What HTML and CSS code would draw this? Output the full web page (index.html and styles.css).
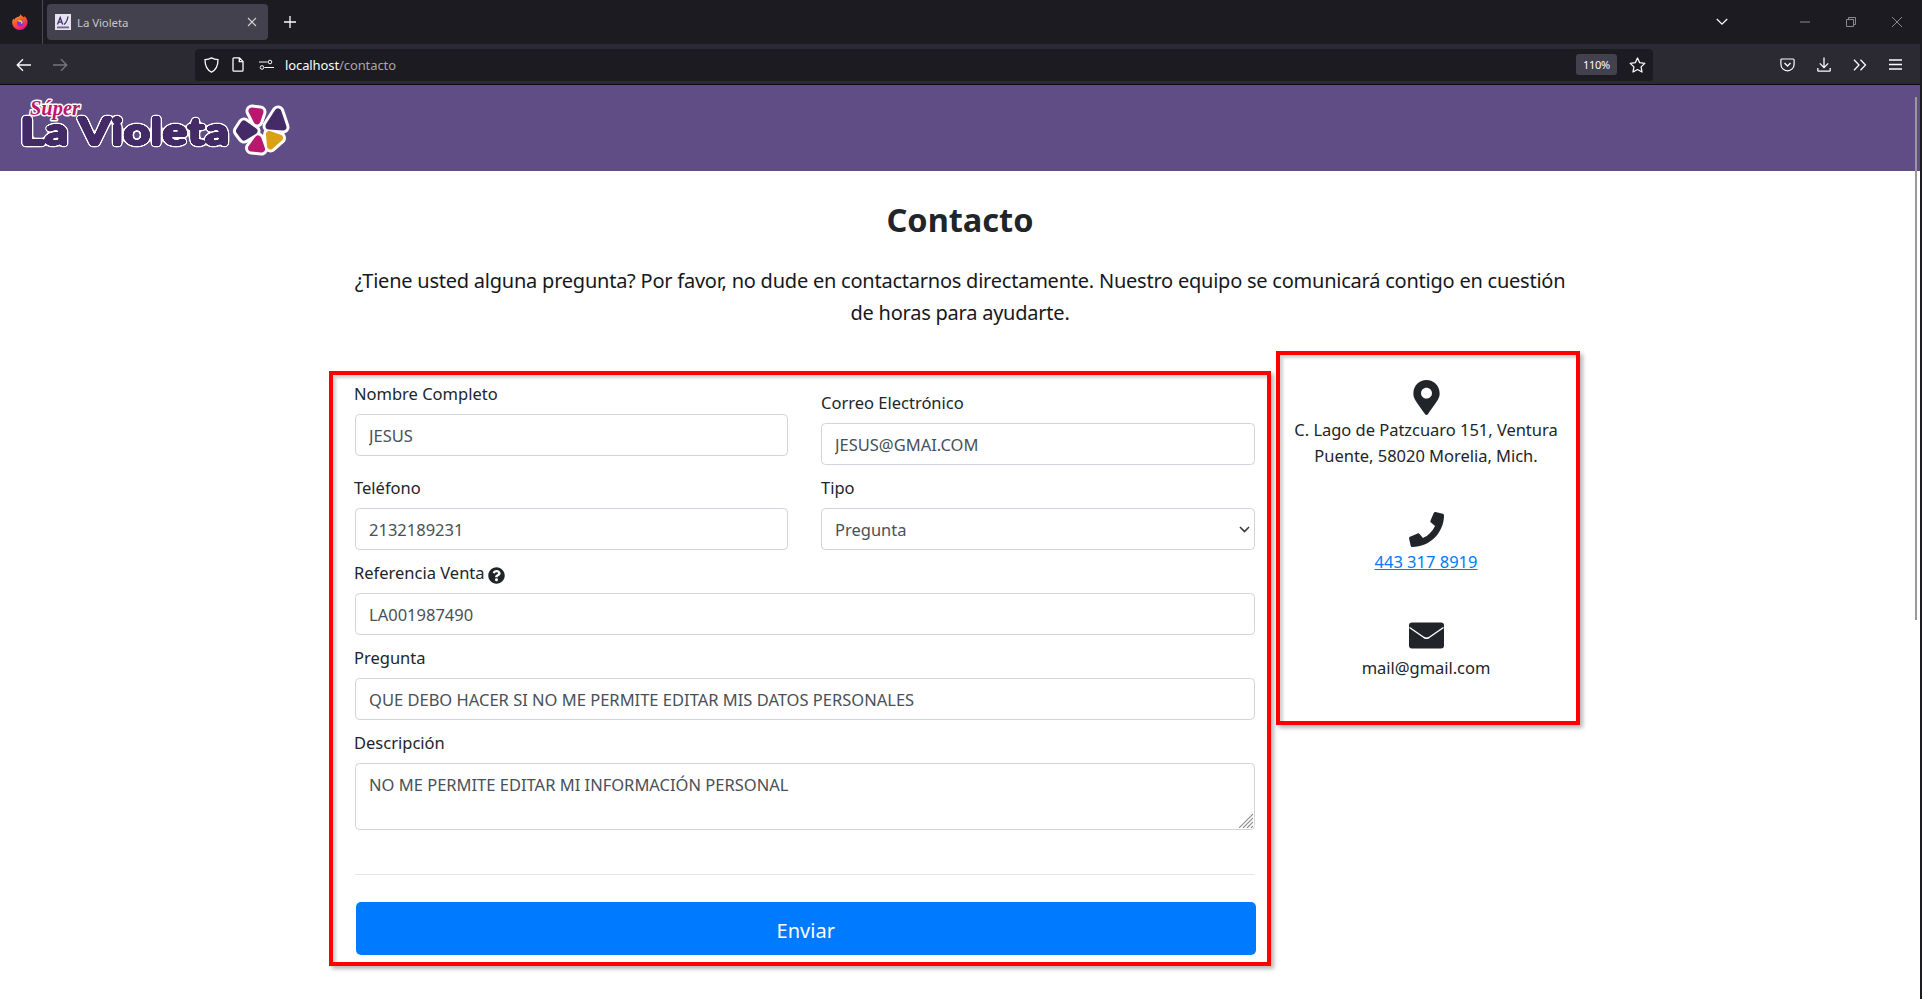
FILE: index.html
```html
<!DOCTYPE html>
<html lang="es">
<head>
<meta charset="utf-8">
<title>La Violeta</title>
<link rel="stylesheet" href="styles.css">
</head>
<body>
<div class="window">
  <div class="tabbar">
    <svg class="ff-logo" width="18" height="18" viewBox="0 0 18 18">
      <defs><linearGradient id="ffg" x1="0" y1="0" x2="0.6" y2="1"><stop offset="0" stop-color="#ffb020"/><stop offset="0.5" stop-color="#ff5a2c"/><stop offset="1" stop-color="#f0157f"/></linearGradient></defs>
      <path d="M9.500 1c.6 1.800 2.500 2.500 3.500 3.500.4-.5.500-1 .5-1.500 1.800 1.500 3 3.500 3 6 0 4.200-3.400 8-7.600 8S1.200 13.500 1.200 9.500c0-1.500.4-2.900 1.300-4 .1.600.4 1 .8 1.300C4 4.800 6.500 4 7.500 3.800 8.500 3.300 9.500 2.200 9.500 1z" fill="url(#ffg)"/>
      <circle cx="9.200" cy="10" r="3.200" fill="#7a35d8"/>
      <path d="M6 8c1.500-1.500 4.500-1.500 5.500.5.500 1.200-.3 2.500-1.800 2.800 1-.9.600-2-.4-2.300C8 8.700 7 8.400 6 8z" fill="#ffc030"/>
    </svg>
    <span class="tab-sep"></span>
    <div class="tab">
      <span class="favicon"><svg width="16" height="16" viewBox="0 0 16 16"><rect width="16" height="16" fill="#e6e3ee"/><path d="M2.500 10.500 5.200 3.500 7.700 10.500M3.500 8.200h3.500M13 2.500c-.5 3-1.500 6-4 8" fill="none" stroke="#3d2f73" stroke-width="1.300"/><rect x="2" y="12.500" width="12" height="1.800" fill="#6f6590"/></svg></span>
      <span class="tab-title">La Violeta</span>
      <svg class="tab-close" width="10" height="10" viewBox="0 0 10 10"><path d="M1 1l8 8M9 1l-8 8" stroke="#d4d4d8" stroke-width="1.100"/></svg>
    </div>
    <svg class="new-tab" width="12" height="12" viewBox="0 0 12 12"><path d="M6 0v12M0 6h12" stroke="#fbfbfe" stroke-width="1.300"/></svg>
    <svg class="tab-list" width="12" height="8" viewBox="0 0 12 8"><path d="M.8 1l5.200 5.200L11.200 1" fill="none" stroke="#fbfbfe" stroke-width="1.300"/></svg>
    <svg class="win-min" width="10" height="2" viewBox="0 0 10 2"><path d="M0 1h10" stroke="#8a8a90" stroke-width="1"/></svg>
    <svg class="win-max" width="10" height="10" viewBox="0 0 10 10"><path d="M.5 2.500h7v7h-7zM2.500 2.500v-2h7v7h-2" fill="none" stroke="#8a8a90" stroke-width="1"/></svg>
    <svg class="win-close" width="10" height="10" viewBox="0 0 10 10"><path d="M0 0l10 10M10 0L0 10" stroke="#8a8a90" stroke-width="1"/></svg>
  </div>
  <div class="toolbar">
    <svg class="nav-back" width="16" height="14" viewBox="0 0 16 14"><path d="M15 7H1.500M7 1.200 1.200 7 7 12.800" fill="none" stroke="#fbfbfe" stroke-width="1.300"/></svg>
    <svg class="nav-forward" width="16" height="14" viewBox="0 0 16 14"><path d="M1 7h13.500M9 1.200 14.800 7 9 12.800" fill="none" stroke="#77767e" stroke-width="1.300"/></svg>
    <div class="urlbar">
      <svg class="url-shield" width="15" height="16" viewBox="0 0 15 16"><path d="M7.500.9C5.600 2 3.400 2.500 1 2.600c0 5.400.8 10 6.500 12.600C13.200 12.600 14 8 14 2.600 11.600 2.500 9.400 2 7.500.9z" fill="none" stroke="#fbfbfe" stroke-width="1.300"/></svg>
      <svg class="url-page" width="12" height="15" viewBox="0 0 12 15"><path d="M1 1.800c0-.5.400-.9.900-.9h5.600L11 4.400v8.800c0 .5-.4.9-.9.900H1.900c-.5 0-.9-.4-.9-.9zM7.300 1v3.600H11" fill="none" stroke="#fbfbfe" stroke-width="1.300"/></svg>
      <svg class="url-perm" width="15" height="12" viewBox="0 0 15 12"><circle cx="11" cy="3" r="1.800" fill="none" stroke="#fbfbfe" stroke-width="1"/><circle cx="3" cy="8.500" r="1.800" fill="none" stroke="#fbfbfe" stroke-width="1"/><path d="M0 3h8.500M5.500 8.500H15" stroke="#fbfbfe" stroke-width="1"/></svg>
      <span class="url-text">localhost<span class="url-path">/contacto</span></span>
      <span class="zoom-badge">110%</span>
      <svg class="url-star" width="17" height="16" viewBox="0 0 17 16"><path d="M8.500 1l2.200 4.700 5.100.7-3.700 3.500.9 5.100-4.500-2.500L4 15l.9-5.100L1.200 6.400l5.100-.7z" fill="none" stroke="#fbfbfe" stroke-width="1.300" stroke-linejoin="round"/></svg>
    </div>
    <svg class="tool-pocket" width="15" height="14" viewBox="0 0 15 14"><path d="M1.800 1h11.400c.5 0 .9.400.9.900v4.300c0 3.600-3 6.600-6.600 6.600S.9 9.800.9 6.200V1.900c0-.5.400-.9.900-.9z" fill="none" stroke="#fbfbfe" stroke-width="1.200"/><path d="M4.500 5l3 3 3-3" fill="none" stroke="#fbfbfe" stroke-width="1.300"/></svg>
    <svg class="tool-download" width="14" height="15" viewBox="0 0 14 15"><path d="M7 .5v10M2.800 6.400 7 10.600l4.200-4.200M.8 11v2.400c0 .4.300.7.700.7h11c.4 0 .7-.3.700-.7V11" fill="none" stroke="#fbfbfe" stroke-width="1.300"/></svg>
    <svg class="tool-more" width="14" height="12" viewBox="0 0 14 12"><path d="M1 .8 6 6l-5 5.200M7.500.8l5 5.200-5 5.200" fill="none" stroke="#fbfbfe" stroke-width="1.300"/></svg>
    <svg class="tool-menu" width="13" height="11" viewBox="0 0 13 11"><path d="M0 1h13M0 5.500h13M0 10h13" stroke="#fbfbfe" stroke-width="1.300"/></svg>
  </div>
  <div class="page">
    <span class="scroll-thumb"></span>
    <header class="site-header">
      <svg class="logo" width="300" height="86" viewBox="0 0 300 86" role="img" aria-label="Súper La Violeta">
        <defs>
          <filter id="logo-fat" x="-6%" y="-30%" width="112%" height="160%" color-interpolation-filters="sRGB">
            <feGaussianBlur in="SourceAlpha" stdDeviation="1.300" result="b1"/>
            <feComponentTransfer in="b1" result="inner"><feFuncA type="linear" slope="9" intercept="-1.100"/></feComponentTransfer>
            <feFlood flood-color="#452a68"/>
            <feComposite in2="inner" operator="in" result="purple"/>
            <feGaussianBlur in="inner" stdDeviation="1.500" result="b2"/>
            <feComponentTransfer in="b2" result="outer"><feFuncA type="linear" slope="9" intercept="-1"/></feComponentTransfer>
            <feFlood flood-color="#ffffff"/>
            <feComposite in2="outer" operator="in" result="white"/>
            <feMerge><feMergeNode in="white"/><feMergeNode in="purple"/></feMerge>
          </filter>
          <path id="p1" d="M252 26 260 27 257 36z"/>
          <path id="p2" d="M278 27 283 42 269 41z"/>
          <path id="p3" d="M244 39 254 46 244 52 239.500 46z"/>
          <path id="p4" d="M258 54 261.500 64 251.500 63z"/>
          <path id="p5" d="M269.500 49.500 279.500 53 270.500 61z"/>
        </defs>
        <g fill="#fff" stroke="#fff" stroke-width="13" stroke-linejoin="round">
          <use href="#p1"/><use href="#p2"/><use href="#p3"/><use href="#p4"/><use href="#p5"/>
        </g>
        <text class="logo-name" x="20" y="60" textLength="209" lengthAdjust="spacingAndGlyphs" filter="url(#logo-fat)">La Violeta</text>
        <text class="logo-super" x="30" y="30" textLength="50" lengthAdjust="spacingAndGlyphs">Súper</text>
        <g stroke-width="7" stroke-linejoin="round">
          <use href="#p1" fill="#b9186f" stroke="#b9186f"/>
          <use href="#p2" fill="#452a68" stroke="#452a68"/>
          <use href="#p3" fill="#452a68" stroke="#452a68"/>
          <use href="#p4" fill="#b9186f" stroke="#b9186f"/>
          <use href="#p5" fill="#dca015" stroke="#dca015"/>
        </g>
      </svg>
    </header>
    <main class="content">
      <h1 class="title">Contacto</h1>
      <p class="lead">¿Tiene usted alguna pregunta? Por favor, no dude en contactarnos directamente. Nuestro equipo se comunicará contigo en cuestión<br>de horas para ayudarte.</p>
      <div class="columns">
        <form class="form-card">
          <div class="form-grid">
            <div class="field">
              <label class="field-label" for="nombre">Nombre Completo</label>
              <input class="control" id="nombre" value="JESUS">
            </div>
            <div class="field field-right field-offset">
              <label class="field-label" for="correo">Correo Electrónico</label>
              <input class="control" id="correo" value="JESUS@GMAI.COM">
            </div>
            <div class="field">
              <label class="field-label" for="telefono">Teléfono</label>
              <input class="control" id="telefono" value="2132189231">
            </div>
            <div class="field field-right">
              <label class="field-label" for="tipo">Tipo</label>
              <div class="select-wrap">
                <select class="control select" id="tipo"><option>Pregunta</option></select>
                <svg class="select-arrow" width="11" height="7" viewBox="0 0 11 7"><path d="M1 1l4.500 4.500L10 1" fill="none" stroke="#343a40" stroke-width="1.600"/></svg>
              </div>
            </div>
            <div class="field field-wide">
              <label class="field-label" for="referencia">Referencia Venta
                <svg class="help" width="17" height="17" viewBox="0 0 512 512"><path fill="#212529" d="M504 256c0 137-111 248-248 248S8 393 8 256 119 8 256 8s248 111 248 248zM262.700 90c-54.500 0-89.300 23-116.500 63.800-3.500 5.300-2.400 12.400 2.700 16.300l34.700 26.300c5.200 3.900 12.600 3 16.700-2.100 17.900-22.700 30.200-35.800 57.300-35.800 20.400 0 45.700 13.100 45.700 33 0 15-12.400 22.700-32.600 34-23.600 13.200-54.800 29.700-54.800 70.900V300c0 6.600 5.400 12 12 12h56c6.600 0 12-5.400 12-12v-1.300c0-28.500 83.400-29.700 83.400-106.900 0-58.100-60.300-101.800-116.600-101.800zM256 338c-25.400 0-46 20.600-46 46 0 25.400 20.600 46 46 46s46-20.600 46-46c0-25.400-20.600-46-46-46z"/></svg>
              </label>
              <input class="control" id="referencia" value="LA001987490">
            </div>
            <div class="field field-wide">
              <label class="field-label" for="pregunta">Pregunta</label>
              <input class="control" id="pregunta" value="QUE DEBO HACER SI NO ME PERMITE EDITAR MIS DATOS PERSONALES">
            </div>
            <div class="field field-wide">
              <label class="field-label" for="descripcion">Descripción</label>
              <div class="textarea-wrap">
                <textarea class="control textarea" id="descripcion">NO ME PERMITE EDITAR MI INFORMACIÓN PERSONAL</textarea>
                <svg class="grip" width="14" height="14" viewBox="0 0 14 14"><path d="M0 14 14 0M4 14 14 4M8 14 14 8M12 14l2-2" stroke="#8f8f8f" stroke-width="1.200" fill="none"/></svg>
              </div>
            </div>
          </div>
          <hr class="divider">
          <button class="submit" type="button">Enviar</button>
        </form>
        <aside class="info-card">
          <div class="info-item">
            <svg class="info-icon" width="27" height="35" viewBox="0 0 384 512"><path fill="#212529" d="M172.300 501.700C27 291 0 269.400 0 192 0 86 86 0 192 0s192 86 192 192c0 77.400-27 99-172.300 309.700-9.500 13.800-29.900 13.800-39.400 0zM192 272c44.200 0 80-35.800 80-80s-35.800-80-80-80-80 35.800-80 80 35.800 80 80 80z"/></svg>
            <span class="info-text">C. Lago de Patzcuaro 151, Ventura Puente, 58020 Morelia, Mich.</span>
          </div>
          <div class="info-item">
            <svg class="info-icon" width="35" height="35" viewBox="0 0 512 512"><path fill="#212529" d="M493.400 24.600l-104-24c-11.300-2.600-22.900 3.300-27.500 13.900l-48 112c-4.200 9.800-1.400 21.300 6.900 28l60.600 49.600c-36 76.700-98.900 140.500-177.200 177.200l-49.600-60.600c-6.800-8.300-18.200-11.100-28-6.900l-112 48C3.900 366.500-2 378.100.6 389.400l24 104C27.100 504.200 36.700 512 48 512c256.100 0 464-207.500 464-464 0-11.200-7.700-20.900-18.600-23.400z"/></svg>
            <a class="phone" href="#">443 317 8919</a>
          </div>
          <div class="info-item">
            <svg class="info-icon" width="35" height="35" viewBox="0 0 35 35"><rect y="4.500" width="35" height="26" rx="3" fill="#212529"/><path d="M.5 9.500 15 19.500q2.500 1.600 5 0L34.500 9.500" fill="none" stroke="#fff" stroke-width="1.500"/></svg>
            <span class="info-text">mail@gmail.com</span>
          </div>
        </aside>
      </div>
    </main>
  </div>
</div>
</body>
</html>
```

FILE: styles.css
```css
* { box-sizing: border-box; }
html, body { margin: 0; height: 100%; overflow: hidden; background: #1c1b22; }
body { font-family: "Noto Sans", "Open Sans", sans-serif; color: #212529; }

.window { width: 1920px; height: 999px; display: flex; flex-direction: column; overflow: hidden; }

/* browser chrome */
.tabbar { height: 44px; background: #1c1b22; display: flex; align-items: center; flex: none; }
.ff-logo { margin-left: 11px; flex: none; }
.tab-sep { width: 1px; height: 44px; background: #4a4950; margin-left: 13px; }
.tab { width: 221px; height: 36px; margin-left: 4px; background: #42414d; border-radius: 4px; display: flex; align-items: center; padding-left: 8px; }
.favicon { width: 16px; height: 16px; display: block; line-height: 0; }
.tab-title { margin-left: 6px; font-size: 11.500px; letter-spacing: -0.1px; color: #c5c5ca; flex: 1; }
.tab-close { margin-right: 11px; }
.new-tab { margin-left: 16px; }
.tab-list { margin-left: 1420px; }
.win-min { margin-left: 72px; }
.win-max { margin-left: 36px; }
.win-close { margin-left: 36px; }

.toolbar { height: 41px; background: #2b2a33; border-bottom: 1px solid #0c0c0d; display: flex; align-items: center; flex: none; padding-top: 1px; }
.nav-back { margin-left: 16px; }
.nav-forward { margin-left: 20px; }
.urlbar { width: 1458px; height: 32px; margin-left: 127px; background: #1c1b22; border-radius: 4px; display: flex; align-items: center; }
.url-shield { margin-left: 9px; }
.url-page { margin-left: 13px; }
.url-perm { margin-left: 15px; }
.url-text { margin-left: 11px; font-size: 13px; color: #fbfbfe; flex: 1; letter-spacing: -0.1px; }
.url-path { color: #a5a5aa; }
.zoom-badge { width: 41px; height: 21px; background: #42414d; border-radius: 3px; color: #fbfbfe; font-size: 11px; display: flex; align-items: center; justify-content: center; letter-spacing: -0.3px; }
.url-star { margin-left: 12px; margin-right: 7px; }
.tool-pocket { margin-left: 127px; }
.tool-download { margin-left: 22px; }
.tool-more { margin-left: 22px; }
.tool-menu { margin-left: 22px; }

/* page */
.page { position: relative; flex: 1; background: #fff; overflow: hidden; }
.scroll-thumb { position: absolute; top: 12px; right: 3px; width: 2px; height: 523px; background: #9a9a9a; }
.site-header { height: 86px; background: #604d85; line-height: 0; }
.logo-name { font-family: "Lato", "Noto Sans", sans-serif; font-weight: 900; font-size: 38px; fill: #452a68; }
.logo-super { font-family: "Liberation Serif", serif; font-style: italic; font-weight: 700; font-size: 21px; fill: #b9186f; stroke: #fff; stroke-width: 3px; stroke-linejoin: round; paint-order: stroke; }

.content { width: 1262px; margin: 0 auto; font-size: 16.500px; }
.title { margin: 28px 0 0; font-size: 32.500px; line-height: 42px; font-weight: 700; text-align: center; }
.lead { margin: 24px 0 22px; font-size: 20px; letter-spacing: -0.23px; line-height: 32px; text-align: center; color: #16181b; white-space: nowrap; }

.columns { display: flex; align-items: flex-start; gap: 5px; }

.form-card { width: 942px; margin-top: 20px; border: 4px solid #f00; padding: 6px 12px 7px 22px; box-shadow: 3px 3px 4px rgba(0,0,0,.28), inset 3px 3px 3px rgba(0,0,0,.18); }
.form-grid { display: grid; grid-template-columns: 433px 434px; column-gap: 33px; }
.field { margin-bottom: 10px; min-width: 0; }
.field-offset { padding-top: 9px; }
.field-wide { grid-column: 1 / -1; }
.field-label { display: flex; align-items: center; gap: 3px; height: 26px; margin: 0 0 7px -1px; padding-bottom: 2px; }
.field-right .field-label { margin-left: 0; }
.help { margin-top: 7px; }

.control { display: block; width: 100%; height: 42px; padding: 0 13px; border: 1px solid #ced4da; border-radius: 4.400px; background: #fff; color: #495057; font: inherit; outline: 0; }
.select-wrap, .textarea-wrap { position: relative; }
.select { appearance: none; }
.select-arrow { position: absolute; right: 5px; top: 18px; }
.textarea-wrap { margin-bottom: -10px; }
.textarea { height: 67px; padding: 9px 13px; resize: none; }
.grip { position: absolute; right: 2px; bottom: 2px; }

.divider { margin: 44px 0 27px; border: 0; border-top: 1px solid #e4e5e7; height: 1px; }
.submit { display: block; width: 900.500px; height: 53px; margin-left: 0.500px; padding: 3px 0 0; border: 0; border-radius: 5px; background: #007bff; color: #fff; font: inherit; font-size: 20px; }

.info-card { width: 304px; height: 374px; border: 4px solid #f00; padding: 25px 14px 0 10px; text-align: center; line-height: 26px; box-shadow: 3px 3px 4px rgba(0,0,0,.28), inset 3px 3px 3px rgba(0,0,0,.18); display: flex; flex-direction: column; gap: 43px; }
.info-item { display: flex; flex-direction: column; align-items: center; gap: 2px; }
.info-icon { display: block; flex: none; }
.info-text { letter-spacing: -0.03px; }
.phone { color: #007bff; }
```
